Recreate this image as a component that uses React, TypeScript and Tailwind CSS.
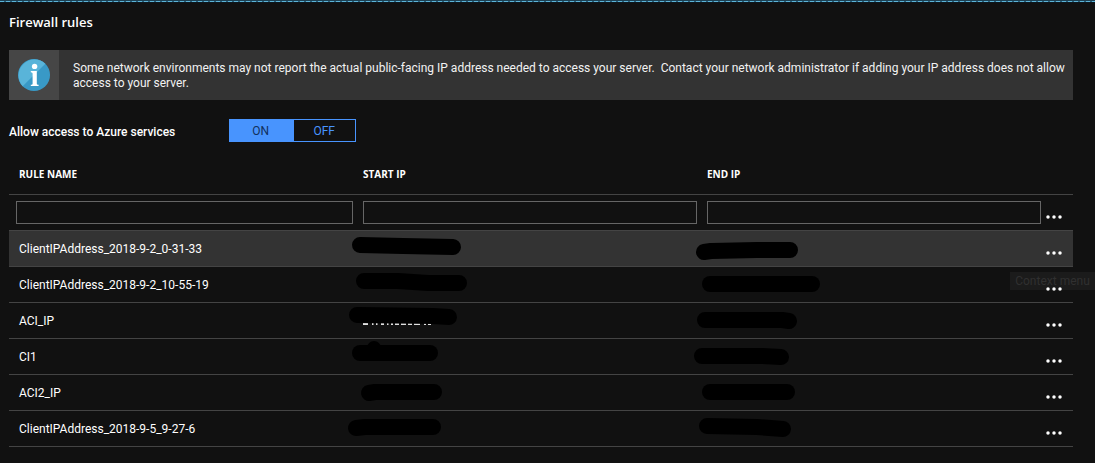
import React from "react";

type Rule = { name: string; start: string; end: string; extra?: "remnant" | "bump" };

const rules: Rule[] = [
  { name: "ClientIPAddress_2018-9-2_0-31-33", start: "M7 14 L50 15 L100 16", end: "M7 21 L14 20 L60 19 L93 19" },
  { name: "ClientIPAddress_2018-9-2_10-55-19", start: "M11 14 L45 14 L75 16 L106 16", end: "M13 17 L115 17" },
  { name: "ACI_IP", start: "M4 12 L80 13 L96 14", end: "M8 17 L85 17 L92 18", extra: "remnant" },
  { name: "CI1", start: "M7 14 L77 14", end: "M5 17 L65 17 L84 18", extra: "bump" },
  { name: "ACI2_IP", start: "M16 18 L22 17 L81 17", end: "M13 17 L90 17" },
  { name: "ClientIPAddress_2018-9-5_9-27-6", start: "M3 17 L12 16 L80 16", end: "M10 15 L60 16 L86 18" },
];

function Marker({ d, extra }: { d: string; extra?: Rule["extra"] }) {
  return (
    <svg className="block h-[35px] w-[130px] overflow-visible" viewBox="0 0 130 35" aria-hidden="true">
      {extra === "remnant" && (
        <path
          d="M10 21 L15 21 M19 21 h1.500 M23 21 h1.500 M28 21 h3 M34 21 h1.500 M38 21 h2 M42 21 h4 M48 21 h5 M55 21 h4 M61 21 h6 M71 21 h2 M75 21 h3"
          stroke="#e0e0e0"
          strokeWidth="2"
        />
      )}
      <path d={d} fill="none" stroke="#000" strokeWidth="16" strokeLinecap="round" strokeLinejoin="round" />
      {extra === "bump" && <circle cx="21" cy="9" r="7" fill="#000" />}
    </svg>
  );
}

function MoreButton({ label }: { label: string }) {
  return (
    <button type="button" aria-label={label} className="relative z-10 flex h-[35px] w-[26px] items-center justify-center pt-2">
      <svg className="h-1 w-4" viewBox="0 0 16 4" fill="#fff" aria-hidden="true">
        <circle cx="2" cy="2" r="1.75" />
        <circle cx="8" cy="2" r="1.75" />
        <circle cx="14" cy="2" r="1.75" />
      </svg>
    </button>
  );
}

function InfoIcon() {
  return (
    <svg className="h-8 w-8" viewBox="0 0 32 32" aria-hidden="true">
      <circle cx="16" cy="16" r="16" fill="#3999c6" />
      <path d="M4.7 27.3 A16 16 0 0 1 27.3 4.7 Z" fill="#59b4d9" />
      <circle cx="16.6" cy="7.4" r="2.7" fill="#fff" />
      <path d="M12.8 12h6v12.400c0 1 .5 1.300 1.800 1.400v1.200h-7.800v-1.200c1.300-.1 1.800-.4 1.800-1.400v-9.600c0-1.100-.4-1.500-1.800-1.600z" fill="#fff" />
    </svg>
  );
}

const headings = ["RULE NAME", "START IP", "END IP"];

export default function App() {
  return (
    <div className="min-h-screen overflow-x-hidden bg-[#111] font-[Roboto,'Open_Sans',sans-serif] text-xs text-white">
      <div className="h-[3px] border-y border-t-[#1c4052] border-b-[#0d161c] bg-[repeating-linear-gradient(90deg,#5cb4d8_0_4px,#2c6480_4px_6px)]" />
      <main className="pl-[9px] pr-[22px]">
        <h1 className="pt-2.5 font-['Open_Sans',sans-serif] text-[13px] leading-[18px] font-semibold">Firewall rules</h1>

        <section className="mt-[19px] flex min-h-[50px] bg-[#333]">
          <div className="flex w-[50px] shrink-0 items-center justify-center bg-[#464646]">
            <InfoIcon />
          </div>
          <p className="self-center px-2 pt-0.5 pl-3.5 leading-[15px] text-[#f2f2f2]">
            Some network environments may not report the actual public-facing IP address needed to access your server.&nbsp; Contact
            your network administrator if adding your IP address does not allow access to your server.
          </p>
        </section>

        <div className="mt-[19px] flex items-center">
          <span id="azure-access" className="w-[220px] pt-0.5 font-medium">
            Allow access to Azure services
          </span>
          <div role="group" aria-labelledby="azure-access" className="flex h-[23px] w-[127px]">
            <button type="button" aria-pressed="true" className="flex-1 border border-[#4894fe] bg-[#4894fe] text-[#12305c]">
              ON
            </button>
            <button type="button" aria-pressed="false" className="flex-1 border border-[#4894fe] text-[#4894fe]">
              OFF
            </button>
          </div>
        </div>

        <table className="mt-[17px] w-full table-fixed border-separate border-spacing-0 text-left">
          <thead>
            <tr className="h-9">
              {headings.map((h) => (
                <th key={h} scope="col" className="border-b border-[#444] p-0 pb-1 pl-2.5 font-['Open_Sans',sans-serif] text-[10px] font-bold">
                  {h}
                </th>
              ))}
              <th className="w-8 border-b border-[#444] p-0" aria-label="Actions" />
            </tr>
          </thead>
          <tbody>
            <tr className="h-9">
              {headings.map((h) => (
                <td key={h} className="border-b border-[#444] p-0 pl-2.5 first:pl-[7px]">
                  <input type="text" aria-label={h} className="block h-[23px] w-full border border-[#666] bg-transparent px-1.5 outline-none" />
                </td>
              ))}
              <td className="border-b border-[#444] p-0">
                <MoreButton label="New rule menu" />
              </td>
            </tr>
            {rules.map((r, i) => (
              <tr key={r.name} className={i === 0 ? "h-9 bg-[#333]" : "h-9"}>
                <td className="border-b border-[#444] p-0 pl-2.5">{r.name}</td>
                <td className="border-b border-[#444] p-0">
                  <Marker d={r.start} extra={r.extra} />
                </td>
                <td className="border-b border-[#444] p-0">
                  <Marker d={r.end} />
                </td>
                <td className="relative border-b border-[#444] p-0">
                  {i === 1 && (
                    <span
                      role="tooltip"
                      className="absolute top-[5px] -right-[22px] flex h-[18px] w-[85px] items-center justify-center bg-[#1b1b1b] whitespace-nowrap text-[#303030]"
                    >
                      Context menu
                    </span>
                  )}
                  <MoreButton label={`Context menu for ${r.name}`} />
                </td>
              </tr>
            ))}
          </tbody>
        </table>
      </main>
    </div>
  );
}
